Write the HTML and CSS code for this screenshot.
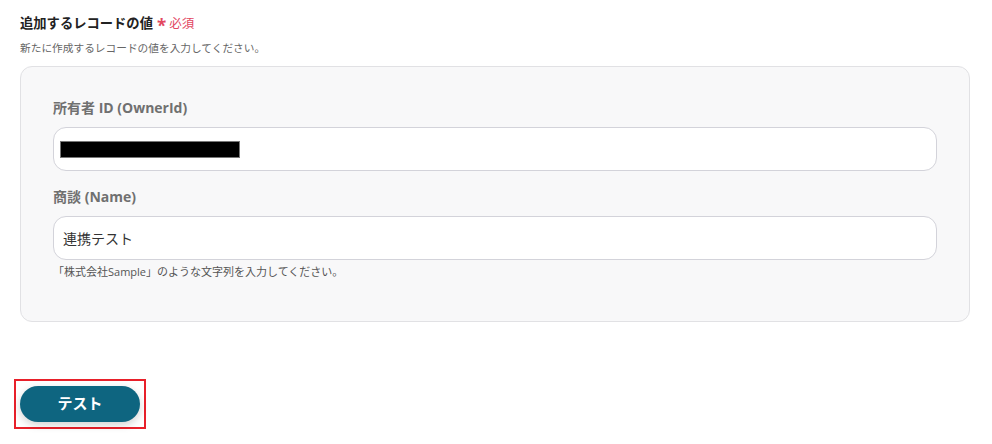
FILE: index.html
```html
<!DOCTYPE html>
<html lang="ja">
<head>
<meta charset="utf-8">
<link rel="stylesheet" href="styles.css">
</head>
<body>
<div class="page">
  <div class="field-head">
    <span class="title">追加するレコードの値</span>
    <span class="req"><span class="ast">*</span>必須</span>
  </div>
  <div class="desc">新たに作成するレコードの値を入力してください。</div>
  <div class="panel">
    <div class="label">所有者 ID (OwnerId)</div>
    <div class="input"><span class="redact"></span></div>
    <div class="label second">商談 (Name)</div>
    <div class="input"><span class="val">連携テスト</span></div>
    <div class="help">「株式会社Sample」のような文字列を入力してください。</div>
  </div>
  <div class="actions">
    <div class="focus-box"><button class="btn">テスト</button></div>
  </div>
</div>
</body>
</html>
```
FILE: styles.css
```css
* { box-sizing: border-box; }
html, body { margin: 0; padding: 0; background: #fff; }
body {
  font-family: "Open Sans", "Noto Sans CJK JP", sans-serif;
  color: #333;
  width: 992px;
  height: 444px;
  overflow: hidden;
}
.page { padding: 10px 22px 0 20px; }
.field-head {
  display: flex;
  align-items: center;
  height: 24px;
}
.title {
  font-size: 13.3px;
  font-weight: 700;
  color: #222;
}
.req {
  font-size: 12.5px;
  color: #e2475f;
  margin-left: 4px;
  display: flex;
  align-items: center;
}
.ast { font-size: 17px; margin-right: 3px; font-weight: 700; line-height: 1; position: relative; top: 3px; }
.desc {
  font-size: 10.7px;
  color: #666;
  margin-top: 6px;
  line-height: 16px;
}
.panel {
  margin-top: 10px;
  background: #f8f8f9;
  border: 1px solid #e1e1e4;
  border-radius: 12px;
  padding: 31px 32px 41px 32px;
  height: 256px;
}
.label {
  font-size: 14px;
  font-weight: 700;
  color: #707070;
  line-height: 20px;
}
.label.second { margin-top: 16px; }
.input {
  margin-top: 9px;
  height: 44px;
  background: #fff;
  border: 1px solid #d3d3da;
  border-radius: 13px;
  display: flex;
  align-items: center;
  padding: 0 6px;
}
.redact {
  display: block;
  width: 180px;
  height: 17px;
  background: #000;
  border: 1px solid #777;
}
.val {
  font-size: 14px;
  color: #333;
  padding-left: 3px;
}
.help {
  font-size: 11px;
  color: #555;
  margin-top: 4px;
  line-height: 15px;
}
.actions {
  margin-top: 57px;
  margin-left: -6px;
}
.focus-box {
  display: inline-block;
  border: 2px solid #e8202a;
  padding: 5px 4px 5px 4px;
}
.btn {
  display: block;
  width: 120px;
  height: 36px;
  border: none;
  border-radius: 18px;
  background: #0e6580;
  color: #fff;
  font-family: "Noto Sans CJK JP", sans-serif;
  font-size: 15px;
  font-weight: 700;
  padding: 0 0 3px 0;
  box-shadow: 0 3px 8px rgba(0,0,0,0.18);
  cursor: pointer;
}
```
